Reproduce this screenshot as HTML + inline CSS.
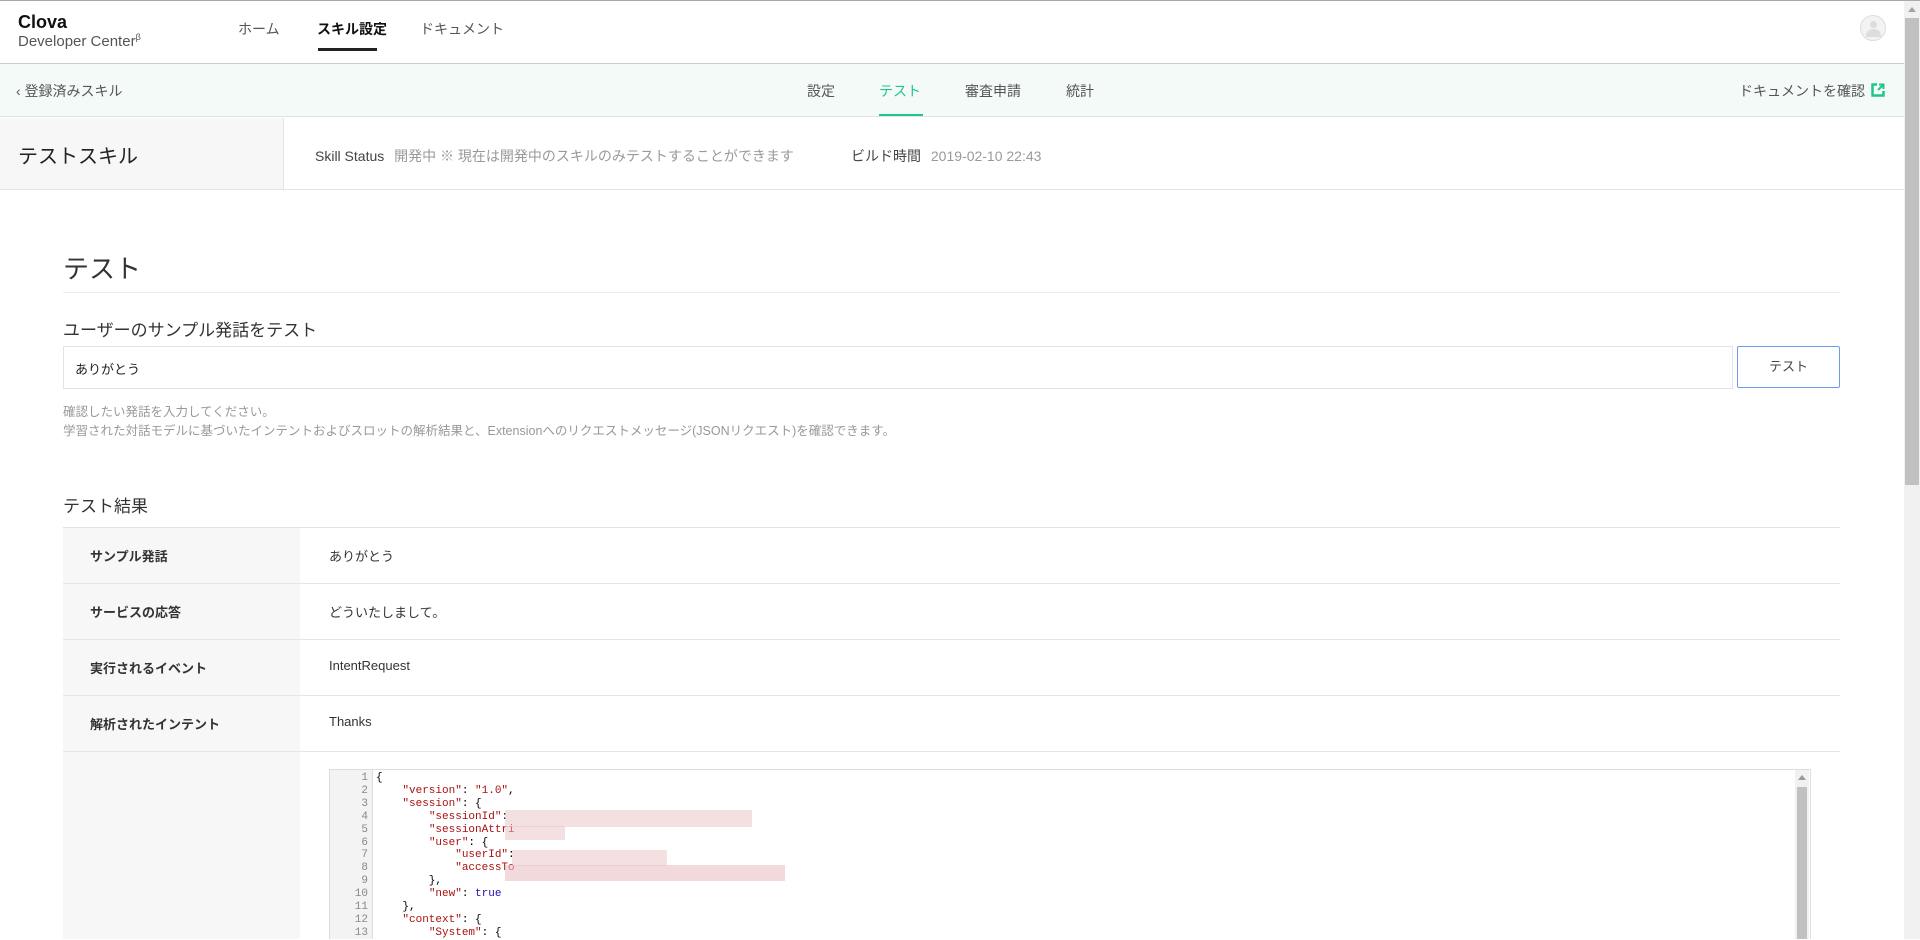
<!DOCTYPE html>
<html><head><meta charset="utf-8"><style>
*{margin:0;padding:0;box-sizing:border-box}
body{width:1920px;height:939px;overflow:hidden;background:#fff;font-family:"Liberation Sans","Noto Sans CJK JP",sans-serif;color:#333;position:relative}
.a{position:absolute;white-space:nowrap}
.code{font-family:"Liberation Mono","Noto Sans CJK JP",monospace;font-size:11px;line-height:12.9px}
.s{color:#a11}.k{color:#21a}
.blur{position:absolute;background:#e9bfc3;opacity:.75}
</style></head><body>
<div class="a" style="left:0;top:0;width:1920px;height:1px;background:#aaa"></div>
<!-- header -->
<div class="a" style="left:18px;top:12px;font-size:18px;font-weight:bold;color:#111">Clova</div>
<div class="a" style="left:18px;top:32px;font-size:15px;color:#555">Developer Center<sup style="font-size:9px">β</sup></div>
<div class="a" style="left:238px;top:19px;font-size:14px;color:#555">ホーム</div>
<div class="a" style="left:317px;top:19px;font-size:14px;font-weight:bold;color:#111">スキル設定</div>
<div class="a" style="left:318px;top:48px;width:59px;height:3px;background:#222"></div>
<div class="a" style="left:420px;top:19px;font-size:14px;color:#555">ドキュメント</div>
<div class="a" style="left:1860px;top:15px;width:26px;height:26px;border:1px solid #ddd;border-radius:50%;background:#f3f3f3;overflow:hidden"><div style="position:absolute;left:9px;top:5px;width:7px;height:7px;border-radius:50%;background:#ddd"></div><div style="position:absolute;left:5px;top:13px;width:15px;height:8px;border-radius:7px 7px 0 0;background:#ddd"></div></div>
<div class="a" style="left:0;top:63px;width:1904px;height:1px;background:#ccc"></div>
<!-- subnav -->
<div class="a" style="left:0;top:64px;width:1904px;height:53px;background:#f4faf8;border-bottom:1px solid #e3e3e3"></div>
<div class="a" style="left:16px;top:81px;font-size:14px;color:#555">‹ 登録済みスキル</div>
<div class="a" style="left:807px;top:81px;font-size:14px;color:#555">設定</div>
<div class="a" style="left:879px;top:81px;font-size:14px;color:#1ec88a">テスト</div>
<div class="a" style="left:879px;top:114px;width:44px;height:2px;background:#1ec88a"></div>
<div class="a" style="left:965px;top:81px;font-size:14px;color:#555">審査申請</div>
<div class="a" style="left:1066px;top:81px;font-size:14px;color:#555">統計</div>
<div class="a" style="left:1739px;top:81px;font-size:14px;color:#555">ドキュメントを確認</div>
<svg class="a" style="left:1871px;top:83px" width="14" height="14" viewBox="0 0 14 14"><path d="M6 1.5H1.5v11h11V8" fill="none" stroke="#1ec88a" stroke-width="2.5"/><path d="M7 7l5-5M8 1.5h4.5V6" fill="none" stroke="#1ec88a" stroke-width="2"/></svg>
<!-- skill row -->
<div class="a" style="left:0;top:118px;width:284px;height:71px;background:#f7f7f7;border-right:1px solid #e3e3e3"></div>
<div class="a" style="left:18px;top:140px;font-size:20px;color:#222">テストスキル</div>
<div class="a" style="left:315px;top:146px;font-size:14px;color:#444">Skill Status <span style="color:#999;margin-left:6px">開発中 ※ 現在は開発中のスキルのみテストすることができます</span></div>
<div class="a" style="left:851px;top:146px;font-size:14px;color:#444">ビルド時間 <span style="color:#999;margin-left:6px">2019-02-10 22:43</span></div>
<div class="a" style="left:0;top:189px;width:1904px;height:1px;background:#e3e3e3"></div>
<!-- main -->
<div class="a" style="left:63px;top:249px;font-size:26px;color:#333">テスト</div>
<div class="a" style="left:63px;top:292px;width:1777px;height:1px;background:#eee"></div>
<div class="a" style="left:63px;top:316px;font-size:17px;color:#333">ユーザーのサンプル発話をテスト</div>
<div class="a" style="left:63px;top:346px;width:1670px;height:43px;border:1px solid #e3e3e3"></div>
<div class="a" style="left:75px;top:359px;font-size:13px;color:#222">ありがとう</div>
<div class="a" style="left:1737px;top:346px;width:103px;height:42px;border:1px solid #6f9be8;border-radius:2px;text-align:center;line-height:40px;font-size:13px;color:#444">テスト</div>
<div class="a" style="left:63px;top:403px;font-size:12.5px;color:#999;line-height:19px">確認したい発話を入力してください。<br>学習された対話モデルに基づいたインテントおよびスロットの解析結果と、Extensionへのリクエストメッセージ(JSONリクエスト)を確認できます。</div>
<div class="a" style="left:63px;top:492px;font-size:17px;color:#333">テスト結果</div>
<!-- table -->
<div class="a" style="left:63px;top:527px;width:1777px;height:1px;background:#e3e3e3"></div>
<div class="a" style="left:63px;top:528px;width:237px;height:411px;background:#f7f7f7"></div>
<div class="a" style="left:63px;top:583px;width:1777px;height:1px;background:#e6e6e6"></div>
<div class="a" style="left:63px;top:639px;width:1777px;height:1px;background:#e6e6e6"></div>
<div class="a" style="left:63px;top:695px;width:1777px;height:1px;background:#e6e6e6"></div>
<div class="a" style="left:63px;top:751px;width:1777px;height:1px;background:#e6e6e6"></div>
<div class="a" style="left:90px;top:546px;font-size:13px;font-weight:bold;color:#333">サンプル発話</div>
<div class="a" style="left:90px;top:602px;font-size:13px;font-weight:bold;color:#333">サービスの応答</div>
<div class="a" style="left:90px;top:658px;font-size:13px;font-weight:bold;color:#333">実行されるイベント</div>
<div class="a" style="left:90px;top:714px;font-size:13px;font-weight:bold;color:#333">解析されたインテント</div>
<div class="a" style="left:329px;top:546px;font-size:13px;color:#333">ありがとう</div>
<div class="a" style="left:329px;top:602px;font-size:13px;color:#333">どういたしまして。</div>
<div class="a" style="left:329px;top:658px;font-size:13px;color:#333">IntentRequest</div>
<div class="a" style="left:329px;top:714px;font-size:13px;color:#333">Thanks</div>
<!-- code -->
<div class="a" style="left:329px;top:769px;width:1482px;height:170px;border:1px solid #ddd;border-bottom:none"></div>
<div class="a" style="left:330px;top:770px;width:43px;height:169px;background:#f3f3f3;border-right:1px solid #ddd"></div>
<div class="a code" style="left:330px;top:772px;width:38px;text-align:right;color:#888">1<br>2<br>3<br>4<br>5<br>6<br>7<br>8<br>9<br>10<br>11<br>12<br>13</div>
<div class="a code" style="left:376px;top:772px;color:#000;white-space:pre">{
    <span class="s">"version"</span>: <span class="s">"1.0"</span>,
    <span class="s">"session"</span>: {
        <span class="s">"sessionId"</span>:
        <span class="s">"sessionAttri</span>
        <span class="s">"user"</span>: {
            <span class="s">"userId"</span>:
            <span class="s">"accessTo</span>
        },
        <span class="s">"new"</span>: <span class="k">true</span>
    },
    <span class="s">"context"</span>: {
        <span class="s">"System"</span>: {</div>
<div class="blur" style="left:505px;top:810px;width:247px;height:17px;opacity:.5"></div>
<div class="blur" style="left:505px;top:826px;width:60px;height:14px;opacity:.5"></div>
<div class="blur" style="left:512px;top:850px;width:155px;height:16px;opacity:.5"></div>
<div class="blur" style="left:505px;top:865px;width:280px;height:16px;opacity:.6"></div>
<div class="a" style="left:1795px;top:770px;width:14px;height:169px;background:#f1f1f1"></div>
<div class="a" style="left:1797px;top:787px;width:10px;height:152px;background:#c1c1c1"></div>
<div class="a" style="left:1798px;top:775px;width:0;height:0;border-left:4px solid transparent;border-right:4px solid transparent;border-bottom:5px solid #999"></div>
<!-- page scrollbar -->
<div class="a" style="left:1904px;top:1px;width:16px;height:938px;background:#f1f1f1"></div>
<div class="a" style="left:1905px;top:18px;width:14px;height:467px;background:#c1c1c1"></div>
<div class="a" style="left:1908px;top:7px;width:0;height:0;border-left:4px solid transparent;border-right:4px solid transparent;border-bottom:5px solid #a3a3a3"></div>
</body></html>
